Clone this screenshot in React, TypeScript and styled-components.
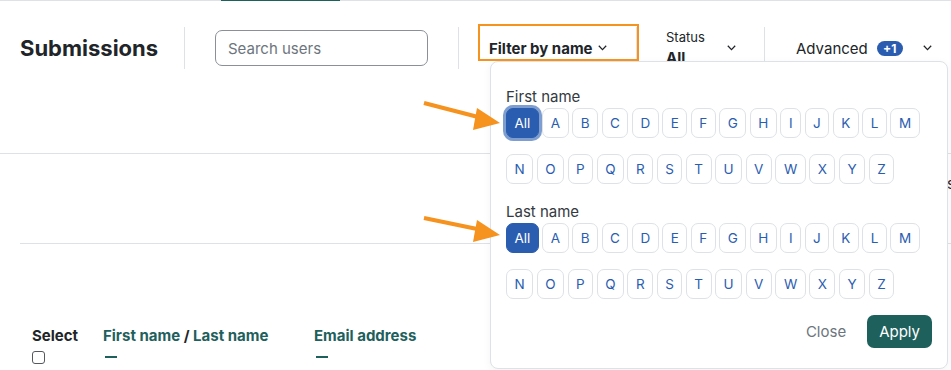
import React from "react";
import styled, { createGlobalStyle } from "styled-components";

const blue = "#2a5db0";
const teal = "#1e605c";
const line = "#dee2e6";
const orange = "#f6921e";

const GlobalStyle = createGlobalStyle`
  body {
    margin: 0;
    background: #fff;
    color: #212529;
    font-family: Inter, "Noto Sans", "Liberation Sans", sans-serif;
  }
  * { box-sizing: border-box; }
`;

const Page = styled.div`
  position: relative;
  width: 951px;
  height: 370px;
  overflow: hidden;
`;

const TabStrip = styled.div`
  height: 1px;
  background: ${line};
`;

const TabIndicator = styled.div`
  margin-left: 221px;
  width: 119px;
  height: 1px;
  background: ${teal};
`;

const Toolbar = styled.div`
  display: flex;
  align-items: flex-start;
  height: 153px;
  padding-top: 26px;
  border-bottom: 1px solid ${line};
`;

const Title = styled.h1`
  margin: 0;
  width: 184px;
  padding-left: 20px;
  font-size: 22px;
  font-weight: 700;
  line-height: 42px;
`;

const Divider = styled.div`
  width: 1px;
  height: 42px;
  background: ${line};
`;

const SearchWrap = styled.div`
  display: flex;
  align-items: center;
  height: 42px;
  padding: 0 30px;
`;

const SearchInput = styled.input`
  width: 213px;
  height: 36px;
  border: 1px solid #8a9097;
  border-radius: 7px;
  padding: 0 12px;
  font: inherit;
  font-size: 15px;
  color: #212529;
  &::placeholder { color: #6c757d; }
`;

const FilterButton = styled.div`
  display: flex;
  align-items: center;
  gap: 5px;
  width: 177px;
  height: 42px;
  padding-left: 30px;
  font-size: 15px;
  font-weight: 700;
`;

const StatusButton = styled.div`
  display: flex;
  align-items: center;
  justify-content: space-between;
  width: 127px;
  height: 42px;
  padding: 0 28px 0 29px;
`;

const StatusText = styled.div`
  display: flex;
  flex-direction: column;
  gap: 3px;
`;

const StatusLabel = styled.span`
  font-size: 13px;
  line-height: 16px;
`;

const StatusValue = styled.span`
  font-size: 15px;
  font-weight: 700;
  line-height: 20px;
`;

const AdvancedButton = styled.div`
  display: flex;
  align-items: center;
  height: 42px;
  padding-left: 31px;
  font-size: 15px;
`;

const Badge = styled.span`
  display: inline-flex;
  align-items: center;
  justify-content: center;
  width: 26px;
  height: 15px;
  margin: 0 20px 0 9px;
  border-radius: 8px;
  background: ${blue};
  color: #fff;
  font-size: 12px;
  font-weight: 700;
`;

const InfoBar = styled.div`
  display: flex;
  align-items: center;
  justify-content: flex-end;
  height: 90px;
  margin-left: 20px;
  padding-bottom: 30px;
  border-bottom: 1px solid ${line};
`;

const Summary = styled.span`
  margin-right: -4px;
  font-size: 15px;
`;

const HeaderRow = styled.div`
  display: grid;
  grid-template-columns: 71px 211px 200px 1fr;
  margin-left: 32px;
  padding-top: 82px;
`;

const HeaderCell = styled.div`
  display: flex;
  flex-direction: column;
  align-items: flex-start;
  font-size: 15px;
  font-weight: 700;
  line-height: 20px;
`;

const SortLink = styled.span`
  color: ${teal};
`;

const SortMark = styled.span`
  width: 12px;
  height: 2px;
  margin: 10px 0 0 2px;
  background: ${teal};
`;

const Checkbox = styled.input.attrs({ type: "checkbox" })`
  appearance: none;
  width: 13px;
  height: 13px;
  margin: 5px 0 0;
  border: 1px solid #55595e;
  border-radius: 3px;
  background: #fff;
`;

const Popover = styled.div`
  position: absolute;
  left: 490px;
  top: 61px;
  width: 458px;
  height: 308px;
  padding: 25px 15px 0;
  background: #fff;
  border: 1px solid ${line};
  border-radius: 8px;
  box-shadow: 0 2px 8px rgba(0, 0, 0, 0.05);
`;

const GroupLabel = styled.div<{ $spaced?: boolean }>`
  margin-top: ${(p) => (p.$spaced ? "18px" : "0")};
  margin-bottom: 1px;
  font-size: 15px;
  line-height: 20px;
  color: #343a40;
`;

const LetterGrid = styled.div`
  display: flex;
  flex-wrap: wrap;
  gap: 16px 3.5px;
`;

const LetterButton = styled.button<{ $active?: boolean; $focused?: boolean }>`
  height: 30px;
  padding: 0 7.5px;
  border: 1px solid ${(p) => (p.$active ? blue : line)};
  border-radius: 7px;
  background: ${(p) => (p.$active ? blue : "#fff")};
  color: ${(p) => (p.$active ? "#fff" : blue)};
  font-family: inherit;
  font-size: 13.5px;
  box-shadow: ${(p) => (p.$focused ? "0 0 0 3px rgba(42, 93, 176, 0.6)" : "none")};
`;

const Footer = styled.div`
  display: flex;
  justify-content: flex-end;
  align-items: center;
  gap: 21px;
  margin-top: 16px;
`;

const CloseButton = styled.span`
  font-size: 15px;
  color: #6c757d;
`;

const ApplyButton = styled.button`
  height: 33px;
  padding: 0 12px;
  border: none;
  border-radius: 7px;
  background: ${teal};
  color: #fff;
  font-family: inherit;
  font-size: 15px;
`;

const Callout = styled.div`
  position: absolute;
  left: 478px;
  top: 24px;
  width: 161px;
  height: 37px;
  border: 2px solid ${orange};
`;

const ArrowSvg = styled.svg<{ $top: number }>`
  position: absolute;
  left: 420px;
  top: ${(p) => p.$top}px;
`;

const Chevron = () => (
  <svg width="9" height="6" viewBox="0 0 9 6">
    <polyline points="0.8,0.8 4.5,4.6 8.2,0.8" fill="none" stroke="#212529" strokeWidth="1.3" />
  </svg>
);

const Arrow = ({ top, tipY, tailY }: { top: number; tipY: number; tailY: number }) => (
  <ArrowSvg $top={top} width="84" height="40" viewBox="0 0 84 40">
    <line x1="4" y1={tailY} x2="62" y2={tipY - 5} stroke={orange} strokeWidth="4" />
    <polygon points={`80,${tipY} 57,${tipY - 15} 53,${tipY + 7}`} fill={orange} />
  </ArrowSvg>
);

const letters = "ABCDEFGHIJKLMNOPQRSTUVWXYZ".split("");

const LetterPicker = ({ focused }: { focused?: boolean }) => (
  <LetterGrid>
    <LetterButton $active $focused={focused}>All</LetterButton>
    {letters.map((l) => (
      <LetterButton key={l}>{l}</LetterButton>
    ))}
  </LetterGrid>
);

export default function App() {
  return (
    <Page>
      <GlobalStyle />
      <TabStrip>
        <TabIndicator />
      </TabStrip>
      <Toolbar>
        <Title>Submissions</Title>
        <Divider />
        <SearchWrap>
          <SearchInput placeholder="Search users" />
        </SearchWrap>
        <Divider />
        <FilterButton>
          Filter by name <Chevron />
        </FilterButton>
        <Divider />
        <StatusButton>
          <StatusText>
            <StatusLabel>Status</StatusLabel>
            <StatusValue>All</StatusValue>
          </StatusText>
          <Chevron />
        </StatusButton>
        <Divider />
        <AdvancedButton>
          Advanced
          <Badge>+1</Badge>
          <Chevron />
        </AdvancedButton>
      </Toolbar>
      <InfoBar>
        <Summary>users</Summary>
      </InfoBar>
      <HeaderRow>
        <HeaderCell>
          Select
          <Checkbox />
        </HeaderCell>
        <HeaderCell>
          <span>
            <SortLink>First name</SortLink> / <SortLink>Last name</SortLink>
          </span>
          <SortMark />
        </HeaderCell>
        <HeaderCell>
          <SortLink>Email address</SortLink>
          <SortMark />
        </HeaderCell>
        <HeaderCell>
          <SortLink>Status</SortLink>
          <SortMark />
        </HeaderCell>
      </HeaderRow>

      <Popover>
        <GroupLabel>First name</GroupLabel>
        <LetterPicker focused />
        <GroupLabel $spaced>Last name</GroupLabel>
        <LetterPicker />
        <Footer>
          <CloseButton>Close</CloseButton>
          <ApplyButton>Apply</ApplyButton>
        </Footer>
      </Popover>

      <Callout />
      <Arrow top={96} tailY={7} tipY={27} />
      <Arrow top={210} tailY={8} tipY={25} />
    </Page>
  );
}
